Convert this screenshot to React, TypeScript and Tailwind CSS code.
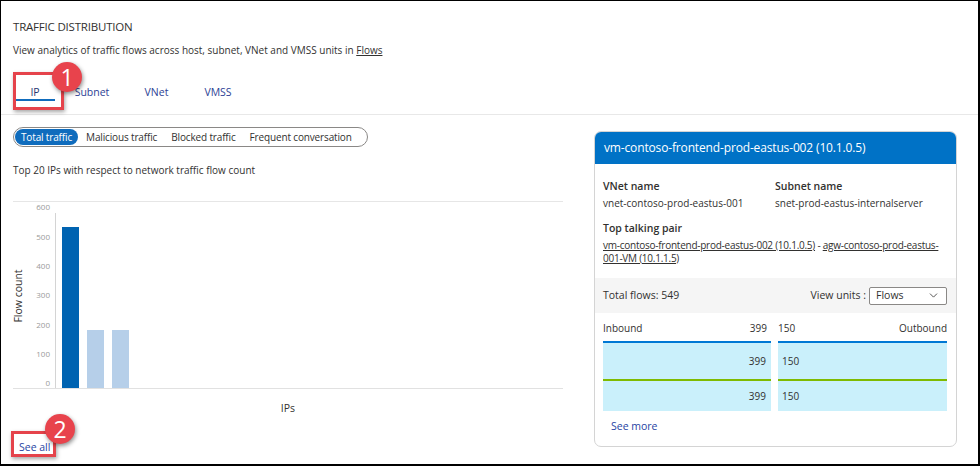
import { ChevronDown } from "lucide-react"

const tabs = [
    { title: 'IP', w: 'w-[40px]' },
    { title: 'Subnet', w: 'w-[74px]' },
    { title: 'VNet', w: 'w-[55px]' },
    { title: 'VMSS', w: 'w-[68px]' },
]
const filters = ['Total traffic', 'Malicious traffic', 'Blocked traffic', 'Frequent conversation']
const yTicks = [
    { label: '600', y: 11 },
    { label: '500', y: 41 },
    { label: '400', y: 70 },
    { label: '300', y: 99 },
    { label: '200', y: 129 },
    { label: '100', y: 158 },
    { label: '0', y: 187 },
]
const bars = [
    { x: 49, top: 31, fill: '#0063b1' },
    { x: 74, top: 134, fill: '#b6cfe9' },
    { x: 99, top: 134, fill: '#b6cfe9' },
]

const Badge = ({ n, className }: { n: string, className: string }) => (
    <div className={`absolute w-[30px] h-[30px] rounded-full bg-[#e8434c] text-white text-[23px] leading-none flex items-center justify-center shadow-[1px_2px_4px_rgba(0,0,0,0.45)] ${className}`}>
        {n}
    </div>
)

const Chart = () => (
    <svg width="550" height="222" className="block overflow-visible">
        <line x1="0" y1="5.5" x2="550" y2="5.5" stroke="#e6e6e6" />
        <line x1="0" y1="192.5" x2="550" y2="192.5" stroke="#e1e1e1" />
        <line x1="42.5" y1="17" x2="42.5" y2="192" stroke="#d4d4d4" />
        {yTicks.map((t) => (
            <text key={t.label} x="37" y={t.y + 3} textAnchor="end" fontSize="8" fill="#9a9a9a">{t.label}</text>
        ))}
        {bars.map((b) => (
            <rect key={b.x} x={b.x} y={b.top} width="17" height={192 - b.top} fill={b.fill} />
        ))}
        <text x="9" y="100" fontSize="10.5" fill="#323130" textAnchor="middle" transform="rotate(-90 9 100)">Flow count</text>
        <text x="275" y="216" fontSize="10.5" fill="#323130" textAnchor="middle">IPs</text>
    </svg>
)

const FlowCard = () => (
    <div className="w-[363px] h-[316px] mt-[16px] border border-[#d4d4d4] rounded-[7px] overflow-hidden flex flex-col">
        <div className="h-[32px] bg-[#0072c6] text-white text-[12px] tracking-[-0.15px] px-[9px] flex items-center">
            vm-contoso-frontend-prod-eastus-002 (10.1.0.5)
        </div>
        <div className="px-[8px] pt-[14px]">
            <div className="flex">
                <div className="w-[172px]">
                    <div className="text-[10.5px] font-semibold text-[#323130] leading-[16px]">VNet name</div>
                    <div className="text-[10px] text-[#323130] leading-[16px] mt-px">vnet-contoso-prod-eastus-001</div>
                </div>
                <div>
                    <div className="text-[10.5px] font-semibold text-[#323130] leading-[16px]">Subnet name</div>
                    <div className="text-[10px] text-[#323130] leading-[16px] mt-px">snet-prod-eastus-internalserver</div>
                </div>
            </div>
            <div className="text-[10.5px] font-semibold text-[#323130] leading-[16px] mt-[9px]">Top talking pair</div>
            <div className="text-[10px] tracking-[-0.25px] text-[#323130] leading-[12.5px] mt-[3px]">
                <div className="whitespace-nowrap">
                    <span className="underline">vm-contoso-frontend-prod-eastus-002 (10.1.0.5)</span> - <span className="underline">agw-contoso-prod-eastus-</span>
                </div>
                <div className="underline">001-VM (10.1.1.5)</div>
            </div>
        </div>
        <div className="mt-[14px] h-[35px] bg-[#f5f5f5] px-[8px] flex items-center justify-between">
            <span className="text-[10.5px] font-medium text-[#323130]">Total flows: 549</span>
            <div className="flex items-center gap-[3px] mr-[1px]">
                <span className="text-[10.5px] text-[#323130]">View units :</span>
                <div className="w-[78px] h-[18px] border border-[#8a8886] rounded-[2px] bg-white flex items-center justify-between pl-[6px] pr-[6px]">
                    <span className="text-[10.5px] text-[#323130]">Flows</span>
                    <ChevronDown size={13} strokeWidth={1.5} color="#323130" />
                </div>
            </div>
        </div>
        <div className="px-[8px] pt-[8px]">
            <div className="flex gap-[7px] text-[10px] text-[#323130] leading-[14px]">
                <div className="w-[168px] flex justify-between pr-[4px]"><span>Inbound</span><span>399</span></div>
                <div className="w-[169px] flex justify-between"><span>150</span><span>Outbound</span></div>
            </div>
            <div className="flex gap-[7px] mt-[6px] text-[10px] text-[#323130]">
                <div className="w-[168px]">
                    <div className="h-[38px] bg-[#caf0fb] border-t-2 border-[#0078d4] flex items-center justify-end pr-[5px]">399</div>
                    <div className="h-[32px] bg-[#caf0fb] border-t-2 border-[#7fba00] flex items-center justify-end pr-[5px]">399</div>
                </div>
                <div className="w-[169px]">
                    <div className="h-[38px] bg-[#caf0fb] border-t-2 border-[#0078d4] flex items-center pl-[4px]">150</div>
                    <div className="h-[32px] bg-[#caf0fb] border-t-2 border-[#7fba00] flex items-center pl-[4px]">150</div>
                </div>
            </div>
            <div className="text-[10.5px] text-[#2743a3] pl-[8px] mt-[8px]">See more</div>
        </div>
    </div>
)

export default function App() {
    return (
        <div className="relative w-[980px] h-[466px] bg-white border-l border-t border-r-2 border-b-2 border-black overflow-hidden font-['Open_Sans','Noto_Sans',sans-serif]">
            <div className="pl-[12px] pt-[18px]">
                <div className="text-[11.5px] text-[#323130] leading-[16px] tracking-[-0.2px]">TRAFFIC DISTRIBUTION</div>
                <div className="text-[10px] text-[#323130] leading-[16px] mt-[7px]">
                    View analytics of traffic flows across host, subnet, VNet and VMSS units in <span className="underline">Flows</span>
                </div>
                <div className="flex mt-[18px] ml-[2px]">
                    {tabs.map((t, i) => (
                        <div
                            key={t.title}
                            className={`${t.w} h-[25px] pt-[8px] flex justify-center text-[10.5px] leading-[16px] ${i === 0 ? 'border-b-2 border-[#0f6cbd] text-[#26356f]' : 'text-[#2d3f95]'}`}
                        >{t.title}</div>
                    ))}
                </div>
            </div>
            <div className="h-px bg-[#e8e8e8] mt-[13px]" />

            <div className="flex pl-[12px]">
                <div className="w-[551px] shrink-0">
                    <div className="mt-[12px] inline-flex items-center h-[20px] border border-[#8a8886] rounded-full px-[1px] pr-[8px] text-[10px] tracking-[-0.15px] text-[#323130]">
                        {filters.map((f, i) => (
                            <div
                                key={f}
                                className={`h-[16px] flex items-center rounded-full ${i === 0 ? 'bg-[#0f6cbd] text-white px-[6px] mr-[1px]' : 'px-[7px]'}`}
                            >{f}</div>
                        ))}
                    </div>
                    <div className="text-[10px] text-[#323130] mt-[15px] leading-[16px]">Top 20 IPs with respect to network traffic flow count</div>
                    <div className="mt-[18px]">
                        <Chart />
                    </div>
                    <div className="text-[10.5px] text-[#2743a3] ml-[6px] mt-[22px]">See all</div>
                </div>
                <div className="ml-[30px]">
                    <FlowCard />
                </div>
            </div>

            <div className="absolute left-[12px] top-[71px] w-[51px] h-[38px] border-[3px] border-[#e5434b] shadow-[1px_2px_4px_rgba(0,0,0,0.35)]" />
            <Badge n="1" className="left-[51px] top-[61px]" />
            <div className="absolute left-[10px] top-[430px] w-[45px] h-[26px] border-[3px] border-[#e5434b] shadow-[1px_2px_4px_rgba(0,0,0,0.35)]" />
            <Badge n="2" className="left-[44px] top-[413px]" />
        </div>
    )
}
